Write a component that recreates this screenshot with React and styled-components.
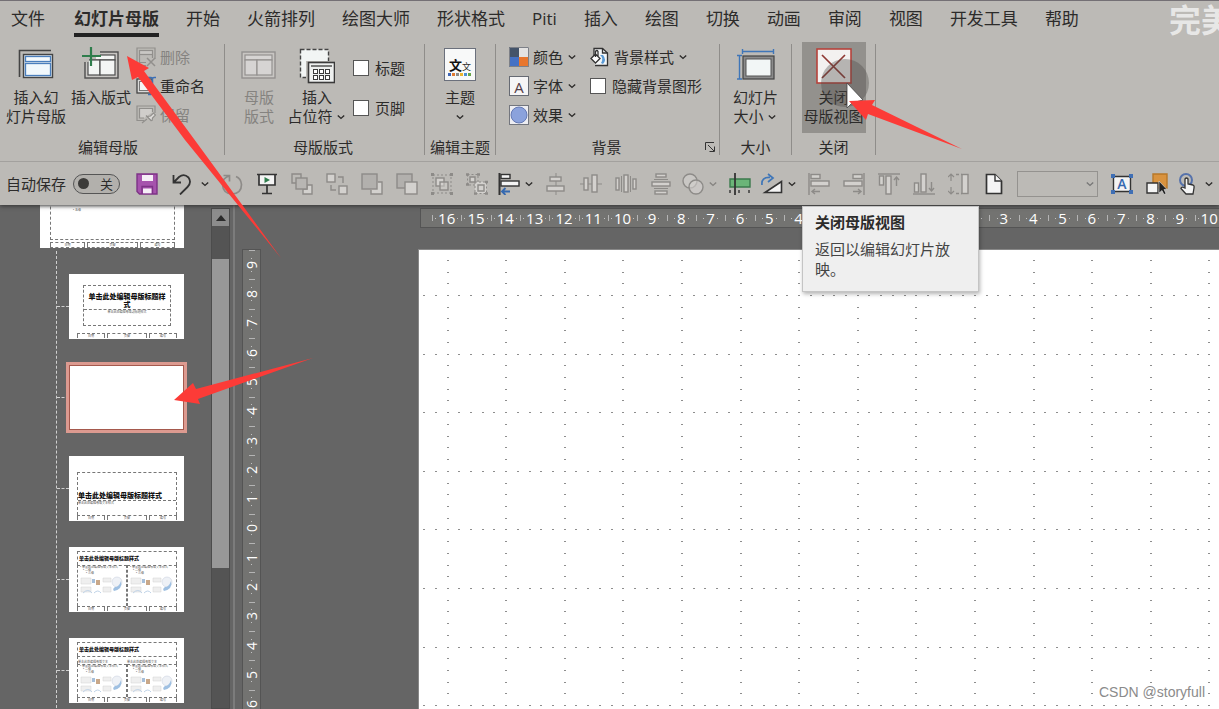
import React from "react"
import styled, { createGlobalStyle } from "styled-components"

const GlobalStyle = createGlobalStyle`
  body {
    margin: 0;
    overflow: hidden;
    background: #656565;
    font-family: "Open Sans", "Noto Sans CJK SC", sans-serif;
    color: #2c2b2a;
  }
  button, input, select {
    font: inherit;
    color: inherit;
    margin: 0;
    padding: 0;
    border: 0;
    background: none;
  }
`

const App = () =>
  <Screen>
    <GlobalStyle />
    <Header>
      <Tabs />
      <Ribbon />
      <QuickAccess />
    </Header>
    <Workspace>
      <Thumbnails />
      <Editor />
    </Workspace>
    <Brand>完美</Brand>
    <Credit>CSDN @storyfull</Credit>
    <Annotations />
  </Screen>

export default App

/* ---------- tabs ---------- */

const tabs = [
  "文件",
  "幻灯片母版",
  "开始",
  "火箭排列",
  "绘图大师",
  "形状格式",
  "Piti",
  "插入",
  "绘图",
  "切换",
  "动画",
  "审阅",
  "视图",
  "开发工具",
  "帮助"
]

const Tabs = () =>
  <TabBar>
    {tabs.map((name, i) =>
      <Tab key={name} type="button" $active={i === 1}>
        {name}
      </Tab>
    )}
  </TabBar>

/* ---------- ribbon ---------- */

const Ribbon = () =>
  <RibbonRow>
    <Group $width={224} $lead={6}>
      <GroupBody $gap={5}>
        <BigButton type="button" $width={60}>
          <MasterIcon />
          <span>插入幻<br />灯片母版</span>
        </BigButton>
        <BigButton type="button" $width={60}>
          <InsertLayoutIcon />
          <span>插入版式</span>
        </BigButton>
        <SmallColumn>
          <SmallButton type="button" disabled>
            <DeleteIcon />删除
          </SmallButton>
          <SmallButton type="button">
            <RenameIcon />重命名
          </SmallButton>
          <SmallButton type="button" disabled>
            <PreserveIcon />保留
          </SmallButton>
        </SmallColumn>
      </GroupBody>
      <GroupTitle $end={14}><span>编辑母版</span></GroupTitle>
    </Group>
    <Divider />
    <Group $width={199} $lead={5}>
      <GroupBody>
        <BigButton type="button" $width={58} disabled>
          <LayoutIcon />
          <span>母版<br />版式</span>
        </BigButton>
        <BigButton type="button" $width={58}>
          <PlaceholderIcon />
          <span>插入<br />占位符 <Chevron /></span>
        </BigButton>
        <CheckColumn>
          <Check><input type="checkbox" />标题</Check>
          <Check><input type="checkbox" />页脚</Check>
        </CheckColumn>
      </GroupBody>
      <GroupTitle $end={8}><span>母版版式</span></GroupTitle>
    </Group>
    <Divider />
    <Group $width={70}>
      <GroupBody $center>
        <BigButton type="button" $width={60}>
          <ThemeIcon />
          <span>主题<br /><Chevron /></span>
        </BigButton>
      </GroupBody>
      <GroupTitle><span>编辑主题</span></GroupTitle>
    </Group>
    <Divider />
    <Group $width={223} $lead={13}>
      <GroupBody $gap={13}>
        <SmallColumn>
          <SmallButton type="button">
            <ColorsIcon />颜色<Chevron />
          </SmallButton>
          <SmallButton type="button">
            <FontsIcon />字体<Chevron />
          </SmallButton>
          <SmallButton type="button">
            <EffectsIcon />效果<Chevron />
          </SmallButton>
        </SmallColumn>
        <SmallColumn>
          <SmallButton type="button">
            <BackgroundIcon />背景样式<Chevron />
          </SmallButton>
          <Check><input type="checkbox" />隐藏背景图形</Check>
        </SmallColumn>
      </GroupBody>
      <GroupTitle>
        <span>背景</span>
        <Launcher type="button" aria-label="设置背景格式">
          <svg width="12" height="12" viewBox="0 0 12 12" fill="none" stroke="#333">
            <path d="M1.5 9V1.5H10M4 4l6 6M10.5 5.5v5h-5" />
          </svg>
        </Launcher>
      </GroupTitle>
    </Group>
    <Divider />
    <Group $width={71}>
      <GroupBody $center>
        <BigButton type="button" $width={60}>
          <SlideSizeIcon />
          <span>幻灯片<br />大小 <Chevron /></span>
        </BigButton>
      </GroupBody>
      <GroupTitle><span>大小</span></GroupTitle>
    </Group>
    <Divider />
    <Group $width={83}>
      <GroupBody $center>
        <BigButton type="button" $width={64} $hot>
          <CloseIcon />
          <span>关闭<br />母版视图</span>
        </BigButton>
      </GroupBody>
      <GroupTitle><span>关闭</span></GroupTitle>
      <Tooltip role="tooltip">
        <strong>关闭母版视图</strong>
        <p>返回以编辑幻灯片放映。</p>
      </Tooltip>
    </Group>
    <Divider />
  </RibbonRow>

const Chevron = () =>
  <ChevronSvg width="10" height="10" viewBox="0 0 10 10" fill="none" stroke="currentColor" strokeWidth="1.4">
    <path d="M1.8 3.4L5 6.4l3.2-3" />
  </ChevronSvg>

const MasterIcon = () =>
  <svg width="36" height="34" viewBox="0 0 36 34" fill="none">
    <path d="M1.5 29V2.5H33" stroke="#444" strokeWidth="1.6" />
    <rect x="5.5" y="6.5" width="29" height="23" fill="#dce6ee" stroke="#444" strokeWidth="1.4" />
    <rect x="7.5" y="8.5" width="25" height="5" fill="#f5fafd" stroke="#4b7fbd" strokeWidth="1.3" />
    <rect x="7.5" y="15.5" width="25" height="12" fill="#f1f8fc" stroke="#4b7fbd" strokeWidth="1.3" />
  </svg>

const LayoutBox = ({ x, line, fill }) =>
  <g transform={`translate(${x} 0)`}>
    <rect x="1" y="4" width="33" height="26" fill="#c8c6c3" stroke={line} strokeWidth="1.4" />
    <g fill={fill} stroke={line} strokeWidth="1.2">
      <rect x="4" y="7" width="27" height="5" />
      <rect x="4" y="12" width="12" height="15" />
      <rect x="16" y="12" width="15" height="15" />
    </g>
  </g>

const InsertLayoutIcon = () =>
  <svg width="38" height="34" viewBox="0 0 38 34" fill="none" overflow="visible">
    <LayoutBox x={2} line="#4d4d4d" fill="#f3f5f4" />
    <path d="M1 3H18V7H14V11H7V14H1Z" fill="#bcbab6" />
    <path d="M9 -1V18M0 8H19" stroke="#2f7d4c" strokeWidth="2.2" />
  </svg>

const LayoutIcon = () =>
  <svg width="36" height="34" viewBox="0 0 36 34" fill="none">
    <LayoutBox x={0} line="#93918f" fill="#d6d4d3" />
  </svg>

const PlaceholderIcon = () =>
  <svg width="36" height="36" viewBox="0 0 36 36" fill="none">
    <rect x="1.5" y="1.5" width="28" height="28" fill="#f2f5f4" stroke="#444" strokeWidth="1.4" strokeDasharray="4 2" />
    <path d="M7 13H31V31H7Z" fill="#bcbab6" />
    <rect x="9.5" y="14.5" width="26" height="20" fill="#eef0ef" stroke="#3a3a3a" strokeWidth="1.6" />
    <path d="M12 18H33" stroke="#3a3a3a" strokeWidth="1.3" />
    <g stroke="#3a3a3a" fill="#fff">
      {[14.5, 20.5, 26.5].map(x => [21.5, 27.5].map(y => <rect key={x + "-" + y} x={x} y={y} width="4" height="4" />))}
    </g>
  </svg>

const DeleteIcon = () =>
  <svg width="20" height="20" viewBox="0 0 20 20" fill="none" stroke="#918f8c" strokeWidth="1.2">
    <path d="M10 18.5H1V1H19V12" />
    <rect x="3.5" y="3.5" width="13" height="4" fill="#c9c7c4" />
    <path d="M16.5 7.5V11M3.5 8V15.5H10" />
    <path d="M11 11l8 8M19 11l-8 8" strokeWidth="1.5" />
  </svg>

const RenameIcon = () =>
  <svg width="20" height="20" viewBox="0 0 20 20" fill="none">
    <rect x="1" y="3" width="15" height="14" fill="#d9d9d8" stroke="#444" strokeWidth="1.3" />
    <rect x="3.5" y="5.5" width="11" height="9" fill="#f5f5f5" stroke="#777" />
    <path d="M12 1.5h3q1.500 0 1.500 1.500v14q0 1.500-1.500 1.500h-3M20 1.500h-2q-1.500 0-1.500 1.500M20 18.500h-2q-1.500 0-1.500-1.500" stroke="#3d6fb5" strokeWidth="1.5" />
  </svg>

const PreserveIcon = () =>
  <svg width="20" height="20" viewBox="0 0 20 20" fill="none" stroke="#918f8c" strokeWidth="1.2">
    <path d="M8 15.5H1V1H19V8" />
    <path d="M16.5 7V3.5H3.5V13H8" fill="#d0cecb" />
    <path d="M6 18l5-4M10 10.5l5.5 5.5M11.5 11.5l3-.5L17.5 8l2 2-3 3-.5 3" fill="#dddbd9" />
  </svg>

const ThemeIcon = () =>
  <ThemeTile>
    <div><b>文</b><i>文</i></div>
    <svg width="24" height="3" viewBox="0 0 24 3">
      {["#3f66b5", "#e07a33", "#8c8c8c", "#eab52f", "#4b8fd0", "#67a548"].map((c, i) =>
        <rect key={c} x={i * 4} width="3" height="3" fill={c} />
      )}
    </svg>
  </ThemeTile>

const ColorsIcon = () =>
  <svg width="20" height="20" viewBox="0 0 20 20">
    <path d="M0 0H10V10H0Z" fill="#44546a" />
    <path d="M10 0H20V10H10Z" fill="#e4e3e2" />
    <path d="M0 10H10V20H0Z" fill="#4571c4" />
    <path d="M10 10H20V20H10Z" fill="#e8762d" />
    <path d="M.5 .5H19.5V19.5H.5Z" fill="none" stroke="#7d8087" />
  </svg>

const FontsIcon = () => <LetterTile>A</LetterTile>

const EffectsIcon = () =>
  <svg width="20" height="20" viewBox="0 0 20 20">
    <rect x=".5" y=".5" width="19" height="19" fill="#eeeef2" stroke="#73767e" />
    <circle cx="10" cy="10" r="8" fill="#8ba2dc" stroke="#6479b4" />
  </svg>

const BackgroundIcon = () =>
  <svg width="20" height="20" viewBox="0 0 20 20" fill="none" stroke="#333" strokeWidth="1.3">
    <path d="M4 9V1.5H12.5L17.5 6V18.5H5" fill="#f4f6f7" />
    <path d="M12.5 1.5V6H17.5" />
    <path d="M10 8q4 3 1 8l2 1q4-4 0-9z" fill="#5b9bd5" stroke="none" />
    <path d="M5.5 7l4.500 4.500L5.500 16 1 11.500zM5.500 10V4.500q1.500-2 2.500 0V9" fill="#fff" />
  </svg>

const SlideSizeIcon = () =>
  <svg width="38" height="34" viewBox="0 0 38 34" fill="none">
    <path d="M5.5 3.5H37M5.5 1V6M36.5 1V6M2.5 7.5V31M0 7.5H5M0 31H5" stroke="#3f76b8" strokeWidth="1.4" />
    <rect x="6" y="8" width="31" height="23" fill="#8b8b8b" stroke="#444" strokeWidth="1.2" />
    <rect x="9" y="11" width="25" height="17" fill="#f2f6f6" stroke="#555" />
  </svg>

const CloseIcon = () =>
  <svg width="36" height="36" viewBox="0 0 36 36" fill="none">
    <rect x="1" y="1" width="34" height="34" fill="#f3f1f0" stroke="#b6433b" strokeWidth="1.6" />
    <path d="M6 7L29 30M29 7L6 30" stroke="#8f3833" strokeWidth="1.7" />
  </svg>

/* ---------- quick access toolbar ---------- */

const QIcon = ({ on, children }) =>
  <svg
    width="22"
    height="22"
    viewBox="0 0 22 22"
    fill={on ? "#f4f4f4" : "#d3d1ce"}
    stroke={on ? "#333" : "#8d8b88"}
    strokeWidth="1.4"
  >
    {children}
  </svg>

const Tool = ({ label, on, split, children }) =>
  <>
    <ToolButton type="button" aria-label={label} $split={split}>
      <QIcon on={on}>{children}</QIcon>
    </ToolButton>
    {split &&
      <ToolMenu type="button" aria-label={label + " 选项"} $dim={!on}>
        <Chevron />
      </ToolMenu>}
  </>

const QuickAccess = () =>
  <QuickBar>
    <span>自动保存</span>
    <Switch type="button" role="switch" aria-checked="false" aria-label="自动保存">
      <i />关
    </Switch>
    <Tool label="保存" on>
      <path d="M1 1H21V21H3.5L1 18.5Z" fill="#a653ad" stroke="#7d3386" />
      <path d="M6 2H17V8H6Z" fill="#f6eef7" stroke="none" />
      <path d="M6 21V13.5H16.500V21" fill="none" stroke="#7d3386" />
      <path d="M7 15.500H15.500V20.300H7Z" fill="#f6eef7" stroke="none" />
    </Tool>
    <Tool label="撤销" on>
      <path d="M2.5 2V9.500H10M3 9L8 4Q13 0 17.500 4.500Q21 9.500 16.500 14L9 21.500" fill="none" strokeWidth="1.8" />
    </Tool>
    <ToolMenu type="button" aria-label="撤销 选项"><Chevron /></ToolMenu>
    <Tool label="重复">
      <path d="M8.5 8.500V2.500H2.500M8 3Q1.500 5 1.500 11.500Q2 20.500 11 21Q20.500 20.500 20.500 11.500Q20 5.500 15 3.500" fill="none" strokeWidth="1.7" />
    </Tool>
    <Tool label="从头开始" on>
      <path d="M1 1.5H21M3 2V12H19V2M11 12V20M6 20.500H16" strokeWidth="1.7" />
      <path d="M8.5 4L14 7L8.500 10Z" fill="#2f7d4c" stroke="none" />
    </Tool>
    <Tool label="置于顶层">
      <path d="M5 10H1V1H10V5" fill="none" />
      <path d="M16 12H21V21H12V16H16Z" />
      <rect x="5" y="5" width="11" height="11" fill="#b8b6b3" />
    </Tool>
    <Tool label="上移一层">
      <rect x="1" y="1" width="8" height="8" />
      <rect x="13" y="13" width="8" height="8" />
      <path d="M12 4H17V10M5 12V17H10" fill="none" />
    </Tool>
    <Tool label="置于底层">
      <path d="M17 9H21V21H10V17" />
      <rect x="1" y="1" width="15" height="15" fill="#b2b0ad" />
    </Tool>
    <Tool label="下移一层">
      <rect x="1" y="1" width="15" height="14" fill="#b2b0ad" />
      <rect x="9" y="9" width="12" height="12" />
    </Tool>
    <Tool label="组合">
      <path d="M2 2H20V20H2Z" fill="none" strokeWidth="1" strokeDasharray="2 2" />
      <rect x="5" y="5" width="8" height="8" />
      <rect x="9" y="9" width="8" height="8" fillOpacity=".5" />
      <path d="M0 1.5H3M19 1.5H22M0 20.5H3M19 20.5H22" strokeWidth="3" />
    </Tool>
    <Tool label="取消组合">
      <path d="M1.5 1.5H12V12H1.5Z" fill="none" strokeWidth="1" strokeDasharray="2 2" />
      <path d="M9 9H20.5V20.5H9Z" strokeWidth="1" strokeDasharray="2 2" />
      <path d="M4 4H9V9H4ZM12 12H18V18H12Z" />
      <path d="M0 1.5H3M11 1.5H14M0 11.5H3M8 20.5H11M19 20.5H22M19 9H22" strokeWidth="2.5" />
    </Tool>
    <Tool label="左对齐" on split>
      <path d="M1.5 0V22" strokeWidth="2" />
      <rect x="3" y="1.5" width="9" height="4" />
      <rect x="3" y="8" width="18" height="5" />
      <path d="M12 18.5H4M7.5 15L4 18.5L7.5 22" stroke="#3569b0" fill="none" strokeWidth="1.8" />
    </Tool>
    <Tool label="水平居中">
      <path d="M11 0V22" strokeWidth="1" />
      <rect x="5" y="4" width="11" height="4" />
      <rect x="2" y="13" width="17" height="5" />
    </Tool>
    <Tool label="垂直居中">
      <path d="M0 11H22" strokeWidth="1" />
      <rect x="4" y="5" width="4" height="12" />
      <rect x="12" y="2" width="5" height="17" />
    </Tool>
    <Tool label="横向分布">
      <rect x="1" y="5" width="3" height="12" />
      <rect x="9" y="2" width="4" height="17" />
      <rect x="18" y="6" width="3" height="10" />
      <path d="M6.5 3V19M15.500 3V19" strokeWidth="1" />
    </Tool>
    <Tool label="纵向分布">
      <rect x="6" y="1" width="10" height="3" />
      <rect x="2" y="9" width="18" height="4" />
      <rect x="5" y="18" width="12" height="3" />
      <path d="M4 6.5H18M4 15.500H18" strokeWidth="1" />
    </Tool>
    <Tool label="合并形状" split>
      <circle cx="8" cy="8" r="7" fill="#c9c7c4" />
      <circle cx="14" cy="14" r="7" fillOpacity=".6" />
    </Tool>
    <Tool label="裁剪" on>
      <path d="M1 6H21V14H1Z" fill="#6bb578" stroke="#3b7a4c" />
      <path d="M6 0V22" strokeWidth="1.8" />
      <path d="M1 17V20M10 17V20M20 17V20" />
    </Tool>
    <Tool label="旋转" on split>
      <path d="M1 12Q0 4 9 4.5M7 1L12 5L7 9" fill="none" stroke="#3f76b8" strokeWidth="1.7" />
      <path d="M4 19.5L20.500 8.500V19.500Z" strokeWidth="1.6" />
    </Tool>
    <Tool label="左侧对齐">
      <path d="M1 0V22" />
      <rect x="3" y="1.5" width="9" height="4" />
      <rect x="3" y="8" width="18" height="5" />
      <path d="M12 18.5H4M7 16L4 18.5L7 21" fill="none" />
    </Tool>
    <Tool label="右侧对齐">
      <path d="M21 0V22" />
      <rect x="10" y="1.5" width="9" height="4" />
      <rect x="1" y="8" width="18" height="5" />
      <path d="M10 18.5H18M15 16L18 18.5L15 21" fill="none" />
    </Tool>
    <Tool label="顶端对齐">
      <path d="M0 1H22" />
      <rect x="1.5" y="3" width="4" height="9" />
      <rect x="8" y="3" width="5" height="18" />
      <path d="M18.5 13V4M16 7L18.500 4L21 7" fill="none" />
    </Tool>
    <Tool label="底端对齐">
      <path d="M0 21H22" />
      <rect x="1.5" y="10" width="4" height="9" />
      <rect x="8" y="1" width="5" height="18" />
      <path d="M18.5 9V18M16 15L18.500 18L21 15" fill="none" />
    </Tool>
    <Tool label="等高">
      <path d="M3 1V8M0 4L3 1L6 4M3 14V21M0 18L3 21L6 18" fill="none" strokeWidth="1.2" />
      <path d="M8 1.5H14M8 20.5H14" fill="none" strokeDasharray="3 2" />
      <rect x="14" y="1.5" width="6" height="19" />
    </Tool>
    <Tool label="新建" on>
      <path d="M3.5 1.5H12L18.500 8V20.500H3.500Z" strokeWidth="1.7" />
      <path d="M12 1.5V8H18.500" />
    </Tool>
    <SelectBox>
      <select aria-label="字体" />
      <Chevron />
    </SelectBox>
    <Tool label="文本框" on>
      <path d="M2.5 3.5H19.500V18.500H2.500Z" />
      <path d="M0 3H4M18 3H22M0 19H4M18 19H22" stroke="#3f6fb5" strokeWidth="4" />
      <text x="11" y="16" textAnchor="middle" fontSize="14" fontWeight="600" fill="#3569b0" stroke="none">A</text>
    </Tool>
    <Tool label="选择" on>
      <path d="M7 1H21V15H7Z" fill="#d9933f" stroke="#b87829" />
      <path d="M1 10H12V20H1Z" />
      <path d="M13 8V20L16 17.5L18 21.500L20 20.500L18 16.500H21Z" fill="#222" stroke="#ddd" strokeWidth=".6" />
    </Tool>
    <Tool label="触摸模式" on split>
      <circle cx="8" cy="7" r="6" fill="none" stroke="#5672ab" strokeWidth="2" />
      <path d="M7 15V6Q8.5 4 10 6V11L15 12Q16.500 12.500 16 15L15 21H8L3 15.500Q3.500 13.500 5.500 14.500Z" strokeWidth="1.3" />
    </Tool>
  </QuickBar>

/* ---------- slide list ---------- */

const Footers = ({ wide }) =>
  <FooterRow $wide={wide}>
    <span>日期</span>
    <span>页脚</span>
    <span>编号</span>
  </FooterRow>

const Picture = () =>
  <svg width="44" height="20" viewBox="0 0 44 20">
    <path d="M1 3H11V9H1ZM1 12H11V17H1ZM23 3H31V7H23ZM23 12H31V17H23Z" fill="#efefef" stroke="#d2d2d2" strokeWidth=".5" />
    <path d="M12 4h3v4h-3z" fill="#a7bfd9" />
    <path d="M16 5h4v5h-4z" fill="#c9a889" />
    <path d="M3 18q5-5 9 0M14 18q4-4 7 0" fill="none" stroke="#bfd3e8" />
    <circle cx="37" cy="7" r="5" fill="#eef1f6" stroke="#ccd3e0" strokeWidth=".6" />
    <path d="M41 6q2 8-7 10q-2-2 1-4q4 0 6-6z" fill="#9fc0e2" />
  </svg>

const Body = () =>
  <BodyCell>
    <p>• 单击此处编辑母版文本样式</p>
    <p>　• 二级</p>
    <p>　　• 三级</p>
    <Picture />
  </BodyCell>

const Thumbnails = () =>
  <Pane>
    <List>
      <MasterThumb>
        <MasterBody>• 五级</MasterBody>
        <Footers wide />
      </MasterThumb>
      <Tree>
        <Branch>
          <Thumb>
            <TitleBox>
              <h3>单击此处编辑母版标题样式</h3>
              <p>单击此处编辑母版副标题样式</p>
            </TitleBox>
            <Footers />
          </Thumb>
        </Branch>
        <Branch>
          <Thumb $selected />
        </Branch>
        <Branch>
          <Thumb>
            <SectionBox>
              <h3>单击此处编辑母版标题样式</h3>
              <p>单击此处编辑母版文本样式</p>
            </SectionBox>
            <Footers />
          </Thumb>
        </Branch>
        <Branch>
          <Thumb>
            <SmallTitle>单击此处编辑母版标题样式</SmallTitle>
            <TwoColumns><Body /><Body /></TwoColumns>
            <Footers />
          </Thumb>
        </Branch>
        <Branch>
          <Thumb>
            <SmallTitle>单击此处编辑母版标题样式</SmallTitle>
            <Captions>
              <span>单击此处编辑母版文本</span>
              <span>单击此处编辑母版文本</span>
            </Captions>
            <TwoColumns><Body /><Body /></TwoColumns>
            <Footers />
          </Thumb>
        </Branch>
      </Tree>
    </List>
    <ScrollBar>
      <ScrollUp type="button" aria-label="向上滚动">
        <svg width="10" height="6" viewBox="0 0 10 6"><path d="M0 6L5 0L10 6Z" fill="#2b2b2b" /></svg>
      </ScrollUp>
      <ScrollThumb />
    </ScrollBar>
    <Splitter />
  </Pane>

/* ---------- editor ---------- */

const range = (from, to) => {
  const step = from > to ? -1 : 1
  return Array.from({ length: Math.abs(to - from) + 1 }, (_, i) => from + i * step)
}

const across = range(16, -10)
const down = range(9, -6)

// guide lines every 2 cm, five dots to a guide
const STEP = 11.72
const guideDots = () => {
  let d = ""
  const dot = (i, j) => {
    const x = Math.round(27.5 + i * STEP)
    const y = Math.round(45 + j * STEP)
    d += `M${x} ${y}h2v1h-2z`
  }
  for (let i = -2; i < 130; i++) {
    for (let j = -3; j < 80; j++) {
      if (i % 5 === 0 || j % 5 === 0) dot(i, j)
    }
  }
  return d
}

const Editor = () =>
  <EditorArea>
    <DownRuler>
      {down.map(n => <DownMark key={n}><span>{Math.abs(n)}</span></DownMark>)}
    </DownRuler>
    <Stage>
      <AcrossRuler>
        {across.map(n => <AcrossMark key={n}><span>{Math.abs(n)}</span></AcrossMark>)}
      </AcrossRuler>
      <Slide>
        <svg width="100%" height="100%" shapeRendering="crispEdges">
          <path d={guideDots()} fill="#8d8d8d" />
        </svg>
      </Slide>
    </Stage>
  </EditorArea>

const Annotations = () =>
  <Overlay width="1219" height="709" viewBox="0 0 1219 709">
    <circle cx="845" cy="83" r="24" fill="#4a4846" fillOpacity=".36" />
    <path d="M847 83V108L852 103L863 100Z" fill="#fff" stroke="#444" strokeWidth=".8" />
    <g fill="#fc3b37">
      <path d="M127 56L149 68L144 71L194 139L281 258L185 140L138 77L132 80Z" />
      <path d="M849 101L875 100L872 105L962 149L868 114L866 120Z" />
      <path d="M174 400L193 383L196 389L313 358L198 399L200 404Z" />
    </g>
  </Overlay>

/* ---------- styles ---------- */

const Screen = styled.div`
  position: relative;
  display: flex;
  flex-direction: column;
  height: 100vh;
  overflow: hidden;
`

const Header = styled.header`
  position: relative;
  z-index: 2;
  background: #bcbab6;
  border-top: 1px solid #747075;
  box-shadow: 0 1px 4px #333;
`

const TabBar = styled.nav`
  display: flex;
  gap: 27px;
  height: 41px;
  padding-left: 11px;
`

const Tab = styled.button`
  box-sizing: border-box;
  height: 36px;
  padding-top: 3px;
  margin-left: ${props => (props.$active ? "2px" : "0")};
  font-size: 17px;
  line-height: 29px;
  white-space: nowrap;
  font-weight: ${props => (props.$active ? "700" : "400")};
  border-bottom: 4px solid ${props => (props.$active ? "#222" : "transparent")};
`

const RibbonRow = styled.div`
  display: flex;
  padding-bottom: 6px;
  font-size: 15px;
`

const Group = styled.section`
  position: relative;
  display: flex;
  flex-direction: column;
  flex: none;
  box-sizing: border-box;
  width: ${props => props.$width}px;
  padding-left: ${props => props.$lead || 0}px;
`

const GroupBody = styled.div`
  display: flex;
  gap: ${props => props.$gap || 0}px;
  justify-content: ${props => (props.$center ? "center" : "flex-start")};
  height: 97px;
`

const GroupTitle = styled.div`
  display: flex;
  padding-right: ${props => props.$end || 0}px;
  line-height: 16px;
  > span {
    flex: 1;
    text-align: center;
  }
`

const Divider = styled.div`
  width: 1px;
  margin-top: 2px;
  background: #8f8d8a;
`

const BigButton = styled.button`
  display: flex;
  flex-direction: column;
  align-items: center;
  flex: none;
  width: ${props => props.$width}px;
  height: 91px;
  padding-top: 6px;
  line-height: 19px;
  white-space: nowrap;
  background: ${props => (props.$hot ? "#93918d" : "none")};
  &:disabled {
    color: #858380;
  }
  > :first-child {
    flex: none;
    margin-bottom: auto;
  }
  > span {
    height: 38px;
    margin-bottom: 7px;
  }
`

const SmallColumn = styled.div`
  display: flex;
  flex-direction: column;
`

const SmallButton = styled.button`
  display: flex;
  align-items: center;
  gap: 4px;
  height: 29px;
  white-space: nowrap;
  &:disabled {
    color: #858380;
  }
`

const CheckColumn = styled.div`
  display: flex;
  flex-direction: column;
  gap: 11px;
  padding: 11px 0 0 7px;
`

const Check = styled.label`
  display: flex;
  align-items: center;
  gap: 6px;
  height: 29px;
  white-space: nowrap;
  input {
    appearance: none;
    box-sizing: border-box;
    width: 16px;
    height: 16px;
    border: 1px solid #555;
    background: #fff;
  }
`

const ChevronSvg = styled.svg`
  flex: none;
`

const Launcher = styled.button`
  display: flex;
  align-items: center;
  width: 12px;
  margin-right: 3px;
`

const ThemeTile = styled.div`
  display: flex;
  flex-direction: column;
  align-items: center;
  justify-content: flex-end;
  box-sizing: border-box;
  width: 32px;
  height: 33px;
  padding-bottom: 4px;
  border: 1px solid #6b707c;
  background: #f8f9f9;
  div {
    display: flex;
    align-items: flex-end;
    line-height: 16px;
  }
  b {
    font-size: 13px;
    color: #111;
  }
  i {
    font-size: 9px;
    font-style: normal;
    line-height: 13px;
  }
`

const LetterTile = styled.span`
  box-sizing: border-box;
  width: 20px;
  height: 20px;
  border: 1px solid #666a73;
  background: #f6f5f6;
  line-height: 20px;
  text-align: center;
  color: #554047;
`

const Tooltip = styled.div`
  position: absolute;
  top: 164px;
  left: 10px;
  box-sizing: border-box;
  width: 177px;
  height: 86px;
  padding: 5px 12px;
  border: 1px solid #c4c4c4;
  background: #efefef;
  box-shadow: 1px 2px 4px rgba(0, 0, 0, 0.3);
  line-height: 20px;
  strong {
    display: block;
  }
  p {
    margin: 7px 0 0;
    color: #444;
  }
`

const QuickBar = styled.div`
  display: flex;
  align-items: center;
  height: 43px;
  padding-left: 6px;
  border-top: 1px solid #a3a19e;
  font-size: 15px;
  white-space: nowrap;
`

const Switch = styled.button`
  display: flex;
  flex: none;
  align-items: center;
  justify-content: space-between;
  box-sizing: border-box;
  width: 47px;
  height: 20px;
  margin: 0 9px 0 7px;
  padding: 0 6px 0 4px;
  border: 1px solid #555;
  border-radius: 10px;
  background: #b2b0ac;
  font-size: 13px;
  i {
    width: 11px;
    height: 11px;
    border-radius: 50%;
    background: #3c3b39;
  }
`

const ToolButton = styled.button`
  display: flex;
  flex: none;
  justify-content: center;
  width: ${props => (props.$split ? "29px" : "35px")};
`

const ToolMenu = styled.button`
  display: flex;
  flex: none;
  justify-content: center;
  width: 12px;
  margin-right: 3px;
  color: ${props => (props.$dim ? "#858380" : "#2c2b2a")};
`

const SelectBox = styled.div`
  position: relative;
  flex: none;
  width: 81px;
  margin: 0 6px;
  color: #777;
  select {
    display: block;
    appearance: none;
    box-sizing: border-box;
    width: 100%;
    height: 26px;
    border: 1px solid #94928f;
  }
  svg {
    position: absolute;
    top: 8px;
    right: 3px;
  }
`

const Workspace = styled.main`
  display: flex;
  flex: 1;
  min-height: 0;
`

const Pane = styled.aside`
  display: flex;
  flex: none;
  width: 236px;
`

const List = styled.div`
  flex: 1;
  display: flex;
  flex-direction: column;
  overflow: hidden;
  font-size: 3px;
  line-height: 4px;
  color: #555;
  p, h3 {
    margin: 0;
  }
`

const MasterThumb = styled.div`
  flex: none;
  display: flex;
  flex-direction: column;
  box-sizing: border-box;
  width: 144px;
  height: 81px;
  margin: -38px 0 3px 40px;
  padding: 4px 9px 0 10px;
  background: #fff;
`

const MasterBody = styled.div`
  flex: 1;
  padding: 36px 0 0 22px;
  border: 1px dashed #777;
`

const Tree = styled.ul`
  display: flex;
  flex-direction: column;
  gap: 26px;
  margin: 0 0 0 56px;
  padding: 23px 0 20px;
  border-left: 1px dashed #d0d0d0;
  list-style: none;
`

const Branch = styled.li`
  display: flex;
  align-items: center;
  &::before {
    content: "";
    width: 12px;
    border-top: 1px dashed #d0d0d0;
  }
`

const Thumb = styled.div`
  display: flex;
  flex-direction: column;
  box-sizing: border-box;
  width: 115px;
  height: 65px;
  padding: 3px 6px 0 7px;
  overflow: hidden;
  background: #fff;
  outline: ${props => (props.$selected ? "3px solid #dc9a90" : "none")};
  border: ${props => (props.$selected ? "1px solid #a5594d" : "1px solid #fff")};
`

const TitleBox = styled.div`
  width: 88px;
  height: 41px;
  margin: 7px auto;
  box-sizing: border-box;
  border: 1px dashed #777;
  text-align: center;
  h3 {
    padding: 7px 2px 0;
    border-bottom: 1px dashed #777;
    font-size: 7px;
    font-weight: 900;
    line-height: 8px;
    color: #111;
  }
`

const SectionBox = styled.div`
  flex: 1;
  margin-top: 12px;
  border: 1px dashed #777;
  border-bottom: 0;
  h3 {
    padding-top: 19px;
    border-bottom: 1px dashed #777;
    font-size: 7px;
    font-weight: 900;
    line-height: 8px;
    white-space: nowrap;
    color: #111;
  }
`

const SmallTitle = styled.h3`
  flex: none;
  padding: 3px 1px;
  border: 1px dashed #777;
  border-bottom: 0;
  font-size: 5px;
  font-weight: 900;
  line-height: 7px;
  color: #111;
`

const Captions = styled.div`
  display: grid;
  grid-template-columns: 1fr 1fr;
  padding-top: 3px;
  border: 1px dashed #777;
  border-bottom: 0;
`

const TwoColumns = styled.div`
  flex: 1;
  display: grid;
  grid-template-columns: 1fr 1fr;
  min-height: 0;
`

const BodyCell = styled.div`
  overflow: hidden;
  border: 1px dashed #777;
  border-bottom: 0;
  padding-left: 2px;
  line-height: 3px;
  white-space: nowrap;
`

const FooterRow = styled.div`
  flex: none;
  display: grid;
  grid-template-columns: 28% 1fr 28%;
  gap: 2px;
  height: ${props => (props.$wide ? "6px" : "5px")};
  margin-top: ${props => (props.$wide ? "2px" : "0")};
  span {
    border: 1px dashed #777;
    border-bottom: ${props => (props.$wide ? "1px dashed #777" : "0")};
    text-align: center;
  }
`

const ScrollBar = styled.div`
  display: flex;
  flex-direction: column;
  box-sizing: border-box;
  width: 19px;
  margin-top: 3px;
  border: 1px solid #4c4c4c;
  background: #545454;
`

const ScrollUp = styled.button`
  display: flex;
  align-items: center;
  justify-content: center;
  height: 17px;
  background: #8c8c8c;
`

const ScrollThumb = styled.div`
  height: 62%;
  margin-top: 33px;
  background: #989898;
`

const Splitter = styled.div`
  width: 2px;
  margin: 0 1px 0 3px;
  background: #7c7c7c;
`

const EditorArea = styled.div`
  flex: 1;
  display: flex;
  min-width: 0;
  overflow: hidden;
`

const DownRuler = styled.div`
  flex: none;
  display: flex;
  flex-direction: column;
  box-sizing: border-box;
  width: 19px;
  margin: 44px 158px -11px 6px;
  border: 1px solid #545454;
  background: #737371;
`

const DownMark = styled.div`
  flex: 1;
  display: flex;
  flex-direction: column;
  align-items: center;
  justify-content: space-between;
  min-height: 0;
  color: #fff;
  font-size: 14px;
  font-weight: 500;
  line-height: 17px;
  &::before {
    content: "";
    width: 6px;
    height: 1px;
    background: #b4b4b4;
  }
  &::after {
    content: "";
    width: 1px;
    height: 1px;
  }
  span {
    display: flex;
    align-items: center;
    gap: 2px;
    writing-mode: vertical-rl;
    transform: rotate(180deg);
  }
  span::before,
  span::after {
    content: "";
    width: 1px;
    height: 1px;
    background: #c4c4c4;
  }
`

const Stage = styled.div`
  flex: 1;
  display: flex;
  flex-direction: column;
  min-width: 0;
`

const AcrossRuler = styled.div`
  display: flex;
  box-sizing: border-box;
  height: 20px;
  margin: 3px -6px 22px 1px;
  padding-left: 11px;
  border: 1px solid #545454;
  background: #737371;
`

const AcrossMark = styled.div`
  flex: 1 1 0;
  display: flex;
  align-items: center;
  justify-content: space-between;
  min-width: 0;
  color: #fff;
  font-size: 15px;
  font-weight: 500;
  line-height: 16px;
  &::before {
    content: "";
    width: 1px;
    height: 6px;
    background: #b4b4b4;
  }
  &::after {
    content: "";
    width: 1px;
    height: 1px;
  }
  span {
    display: flex;
    align-items: center;
    gap: 2px;
  }
  span::before,
  span::after {
    content: "";
    width: 1px;
    height: 1px;
    background: #c4c4c4;
  }
`

const Slide = styled.div`
  flex: 1;
  min-height: 0;
  overflow: hidden;
  background: #fff;
  box-shadow: 0 0 0 1px #888;
`

const Brand = styled.div`
  position: absolute;
  z-index: 3;
  top: 0;
  left: 1169px;
  color: rgba(240, 240, 240, 0.85);
  font-size: 32px;
  font-weight: 700;
  line-height: 40px;
  white-space: nowrap;
`

const Credit = styled.div`
  position: absolute;
  right: 14px;
  bottom: 7px;
  color: #8b8b8b;
  font-family: "Liberation Sans", sans-serif;
  font-size: 14px;
  line-height: 20px;
`

const Overlay = styled.svg`
  position: absolute;
  z-index: 4;
  top: 0;
  left: 0;
  pointer-events: none;
`
